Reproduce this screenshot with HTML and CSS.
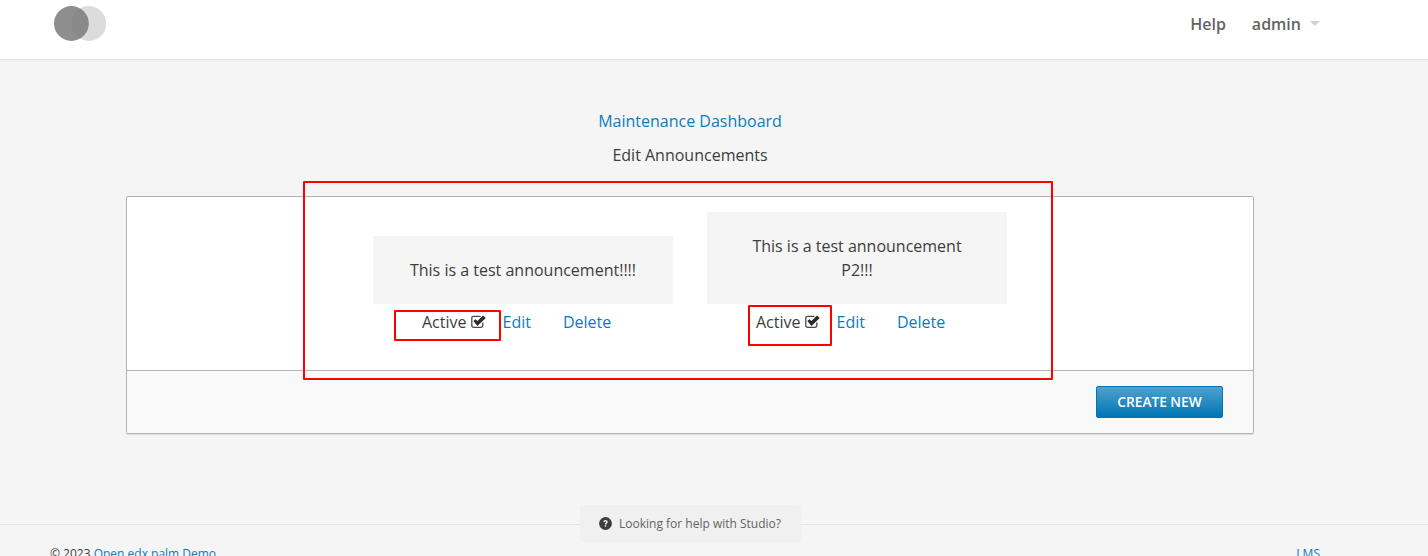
FILE: index.html
```html
<!DOCTYPE html>
<html lang="en">
<head>
<meta charset="utf-8">
<title>Edit Announcements</title>
<link rel="stylesheet" href="styles.css">
</head>
<body>
<header class="topbar">
  <svg class="logo" width="52" height="36" viewBox="0 0 52 36" aria-hidden="true">
    <circle cx="34.800" cy="17.500" r="17.400" fill="#dcdcdc"/>
    <circle cx="17.400" cy="17.500" r="17.400" fill="#7a7a7a" fill-opacity="0.85"/>
  </svg>
  <nav class="topnav">
    <a class="navlink" href="#">Help</a>
    <a class="navlink" href="#">admin<span class="caret"></span></a>
  </nav>
</header>
<main class="content">
  <a class="dash-link" href="#">Maintenance Dashboard</a>
  <h1 class="page-title">Edit Announcements</h1>
  <section class="card">
    <div class="card-body">
      <article class="announcement">
        <div class="message">This is a test announcement!!!!</div>
        <div class="actions">
          <span class="status">Active
            <svg class="check" viewBox="0 0 15 13" width="15" height="13" aria-hidden="true"><path d="M11.800 7.500v3A1.800 1.800 0 0 1 10 12.300H2.600A1.800 1.800 0 0 1 .8 10.500V3.100A1.800 1.800 0 0 1 2.600 1.300h7" fill="none" stroke="#4a4a4a" stroke-width="1.300"/><path d="M2.400 6.100 4.400 4.200 6.400 6.100 12 .6 14.800 3 6.400 11z" fill="#2b2b2b"/></svg>
          </span>
          <a class="action-edit" href="#">Edit</a>
          <a class="action-delete" href="#">Delete</a>
        </div>
      </article>
      <article class="announcement">
        <div class="message">This is a test announcement<br>P2!!!</div>
        <div class="actions">
          <span class="status">Active
            <svg class="check" viewBox="0 0 15 13" width="15" height="13" aria-hidden="true"><path d="M11.800 7.500v3A1.800 1.800 0 0 1 10 12.300H2.600A1.800 1.800 0 0 1 .8 10.500V3.100A1.800 1.800 0 0 1 2.600 1.300h7" fill="none" stroke="#4a4a4a" stroke-width="1.300"/><path d="M2.400 6.100 4.400 4.200 6.400 6.100 12 .6 14.800 3 6.400 11z" fill="#2b2b2b"/></svg>
          </span>
          <a class="action-edit" href="#">Edit</a>
          <a class="action-delete" href="#">Delete</a>
        </div>
      </article>
    </div>
    <div class="card-footer">
      <a class="btn" href="#">CREATE NEW</a>
    </div>
  </section>
</main>
<footer class="pagefoot">
  <div class="helpline"><div class="help-pill">
    <svg class="help-icon" width="13" height="13" viewBox="0 0 13 13" aria-hidden="true"><circle cx="6.500" cy="6.500" r="6.400" fill="#3d3d3d"/><path d="M4.300 5c0-1.300 1-2 2.200-2s2.200.8 2.200 1.900c0 1.500-1.500 1.500-1.500 2.600H5.800c0-1.800 1.400-1.700 1.400-2.500 0-.4-.3-.7-.7-.7-.5 0-.8.3-.8.7z" fill="#f3f3f3"/><rect x="5.800" y="8.200" width="1.400" height="1.500" fill="#f3f3f3"/></svg>
    <span>Looking for help with Studio?</span>
  </div></div>
  <div class="footrow">
    <span>© 2023 <a href="#">Open edx palm Demo</a></span>
    <a href="#">LMS</a>
  </div>
</footer>
<div class="mark mark-large"></div>
<div class="mark mark-one"></div>
<div class="mark mark-two"></div>
</body>
</html>
```

FILE: styles.css
```css
* { box-sizing: border-box; }
html, body { height: 556px; overflow: hidden; }
body {
  margin: 0;
  background: #f5f5f5;
  color: #3d3d3d;
  font-family: "Open Sans", sans-serif;
  font-size: 16px;
  position: relative;
}
a { color: #0a7cc0; text-decoration: none; }

.topbar {
  height: 60px;
  background: #fff;
  border-bottom: 1px solid #e4e4e4;
  box-shadow: 0 1px 1px rgba(0,0,0,.03);
  display: flex;
  align-items: flex-start;
  justify-content: space-between;
  padding: 6px 108px 0 54px;
}
.logo { display: block; }
.topnav { display: flex; gap: 26px; padding-top: 7px; }
.navlink { color: #646464; font-weight: 600; font-size: 16px; line-height: 22px; display: flex; align-items: center; }
.caret {
  width: 0; height: 0;
  margin-left: 9px;
  margin-top: -2px;
  border-left: 5px solid transparent;
  border-right: 5px solid transparent;
  border-top: 5px solid #d2d2d2;
}

.content { display: flex; flex-direction: column; align-items: center; padding: 50px 48px 0 0; }
.dash-link { font-size: 16px; line-height: 22px; }
.page-title { margin: 12px 0 0; font-size: 16px; font-weight: 400; line-height: 22px; color: #3d3d3d; }

.card {
  width: 1128px;
  margin-top: 30px;
  background: #fff;
  border: 1px solid #b2b2b2;
  border-radius: 2px;
  box-shadow: 0 1px 1px rgba(0,0,0,.1);
}
.card-body {
  height: 174px;
  display: flex;
  justify-content: center;
  align-items: flex-end;
  gap: 34px;
  padding-bottom: 30px;
  border-bottom: 1px solid #b2b2b2;
}
.announcement { width: 300px; }
.message {
  background: #f5f5f5;
  padding: 22px 20px;
  text-align: center;
  line-height: 24px;
}
.actions { display: flex; height: 36px; align-items: center; line-height: 22px; padding-left: 49px; }
.status { display: flex; align-items: center; gap: 4px; }
.check { display: block; margin-top: -2px; }
.action-edit { margin-left: 17px; }
.action-delete { margin-left: 32px; }

.card-footer {
  height: 62px;
  background: #f9f9f9;
  display: flex;
  justify-content: flex-end;
  align-items: center;
  padding-right: 30px;
}
.btn {
  width: 127px;
  height: 32px;
  display: flex;
  align-items: center;
  justify-content: center;
  padding-bottom: 1px;
  color: #fff;
  font-size: 13.700px;
  font-weight: 600;
  border: 1px solid #0075b4;
  border-radius: 2px;
  background: linear-gradient(#4fa1cc, #0075b4);
}

.pagefoot { margin-top: 90px; }
.helpline { position: relative; border-top: 1px solid #e4e4e4; height: 0; }
.help-pill {
  position: absolute;
  top: -20px;
  left: 580px;
  width: 221px;
  height: 37px;
  background: #f0f0f0;
  border-radius: 4px;
  display: flex;
  align-items: center;
  gap: 7px;
  padding-left: 19px;
  font-size: 12px;
  color: #646464;
}
.help-icon { display: block; }
.footrow {
  display: flex;
  justify-content: space-between;
  padding: 20px 108px 0 50px;
  font-size: 12px;
  line-height: 17px;
}

.mark { position: absolute; border: 2px solid #f00; border-radius: 1px; pointer-events: none; }
.mark-large { left: 303px; top: 181px; width: 750px; height: 199px; }
.mark-one { left: 394px; top: 310px; width: 107px; height: 31px; }
.mark-two { left: 748px; top: 305px; width: 84px; height: 41px; }
```
